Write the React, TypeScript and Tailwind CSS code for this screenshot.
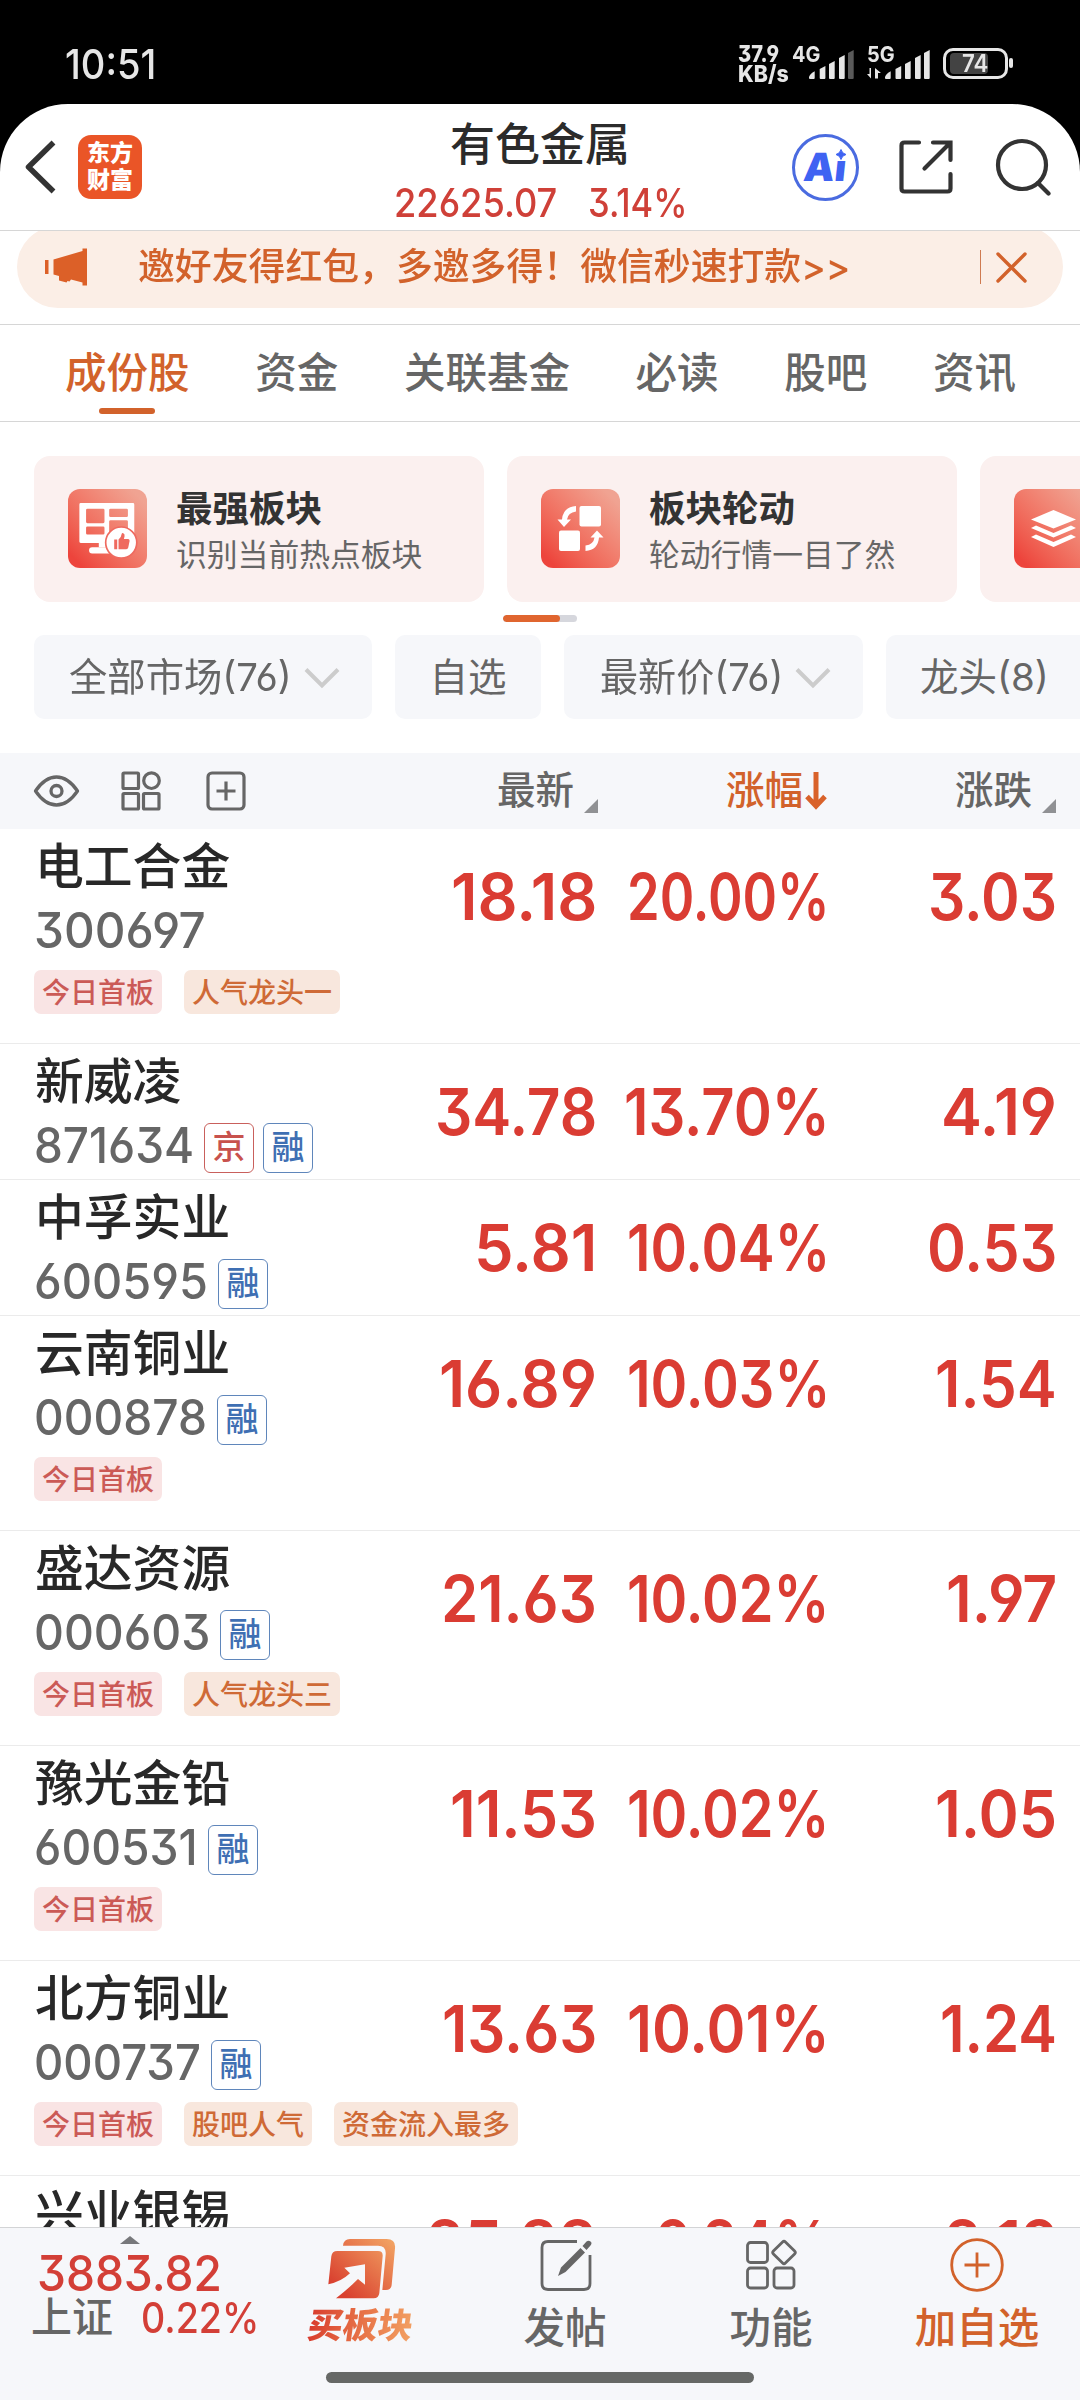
import { useLayoutEffect, useRef, useState } from "react";
import type { ReactNode } from "react";

type Tag = { text: string; hot?: boolean };

// each number carries the width it takes up in its column
type Num = [text: string, width: number];

type Stock = {
  name: string;
  code: Num;
  marks?: string[];
  tags?: Tag[];
  price: Num;
  pct: Num;
  change: Num;
};

const FIRST: Tag = { text: "今日首板", hot: true };

const stocks: Stock[] = [
  {
    name: "电工合金",
    code: ["300697", 168],
    tags: [FIRST, { text: "人气龙头一" }],
    price: ["18.18", 140],
    pct: ["20.00%", 197],
    change: ["3.03", 123],
  },
  {
    name: "新威凌",
    code: ["871634", 156],
    marks: ["京", "融"],
    price: ["34.78", 156],
    pct: ["13.70%", 200],
    change: ["4.19", 110],
  },
  {
    name: "中孚实业",
    code: ["600595", 170],
    marks: ["融"],
    price: ["5.81", 117],
    pct: ["10.04%", 197],
    change: ["0.53", 124],
  },
  {
    name: "云南铜业",
    code: ["000878", 169],
    marks: ["融"],
    tags: [FIRST],
    price: ["16.89", 152],
    pct: ["10.03%", 197],
    change: ["1.54", 116],
  },
  {
    name: "盛达资源",
    code: ["000603", 172],
    marks: ["融"],
    tags: [FIRST, { text: "人气龙头三" }],
    price: ["21.63", 150],
    pct: ["10.02%", 197],
    change: ["1.97", 105],
  },
  {
    name: "豫光金铅",
    code: ["600531", 160],
    marks: ["融"],
    tags: [FIRST],
    price: ["11.53", 141],
    pct: ["10.02%", 197],
    change: ["1.05", 116],
  },
  {
    name: "北方铜业",
    code: ["000737", 163],
    marks: ["融"],
    tags: [FIRST, { text: "股吧人气" }, { text: "资金流入最多" }],
    price: ["13.63", 149],
    pct: ["10.01%", 197],
    change: ["1.24", 111],
  },
  {
    name: "兴业银锡",
    code: ["000426", 169],
    marks: ["融"],
    price: ["25.88", 165],
    pct: ["9.24%", 168],
    change: ["2.19", 107],
  },
];

// Squeezes a line of text to the given width
const Fit = ({ w, children }: { w: number; children: ReactNode }) => {
  const ref = useRef<HTMLSpanElement>(null);
  const [scale, setScale] = useState(1);

  useLayoutEffect(() => {
    if (ref.current) setScale(w / ref.current.offsetWidth);
  }, [w]);

  return (
    <span className="inline-flex shrink-0 justify-start" style={{ width: w }}>
      <span
        ref={ref}
        className="inline-block shrink-0 origin-left whitespace-nowrap"
        style={{ transform: `scaleX(${scale})` }}
      >
        {children}
      </span>
    </span>
  );
};

const StatusBar = () => (
  <div className="flex h-[104px] shrink-0 justify-between pt-[44px] pr-[67px] pl-[65px] text-[#e6e6e6]">
    <div className="h-10 text-[41px] leading-10 font-medium">
      <Fit w={91}>10:51</Fit>
    </div>
    <div className="flex h-10">
      <div className="w-[55px] text-[23px] leading-[20px] font-extrabold">
        <div className="h-5">
          <Fit w={41}>37.9</Fit>
        </div>
        <div className="h-5">
          <Fit w={51}>KB/s</Fit>
        </div>
      </div>
      <div className="relative h-10 w-[137px] text-[22px] leading-5 font-bold">
        <svg className="h-10 w-[137px]" viewBox="0 0 137 40" fill="#e6e6e6">
          <path d="M16 33.500q0-3 5.700-6.200V34q0 1-1 1H17q-1 0-1-1zM26.700 25l5.700-3v12q0 1-1 1h-3.700q-1 0-1-1zM36 20l5.700-3v17q0 1-1 1H37q-1 0-1-1zM46 14l5.700-3v23q0 1-1 1H47q-1 0-1-1z" />
          <path d="M55 9l5.700-3v28q0 1-1 1H56q-1 0-1-1z" fill="#5a5a5a" />
          <path d="M78 24v10.500L74 30h2.500v-6zM82 34.500V24l6 5h-3v5.500z" />
          <path d="M92 33.500q0-3 5.700-6.200V34q0 1-1 1H93q-1 0-1-1zM102.500 25l5.700-3v12q0 1-1 1h-3.700q-1 0-1-1zM112 20l5.700-3v17q0 1-1 1H113q-1 0-1-1zM122 14l5.700-3v23q0 1-1 1H123q-1 0-1-1zM131 9l5.700-3v28q0 1-1 1H132q-1 0-1-1z" />
        </svg>
        <div className="absolute top-0 -left-px">
          <Fit w={28}>4G</Fit>
        </div>
        <div className="absolute top-0 left-[74px]">
          <Fit w={28}>5G</Fit>
        </div>
      </div>
      <div className="mt-1 ml-[13px] flex h-[31px] w-[65px] items-center rounded-[10px] border-[3px] border-[#e6e6e6] pl-1">
        <div className="flex h-[21px] w-[38px] items-center justify-end rounded-[4px] bg-[#434343] text-[24px] leading-[21px] font-semibold">
          <Fit w={26}>74</Fit>
        </div>
      </div>
      <div className="mt-[14px] ml-[1px] h-[10px] w-[4px] rounded-[2px] bg-[#e6e6e6]" />
    </div>
  </div>
);

const Header = () => (
  <div className="flex h-[127px] shrink-0 items-center rounded-t-[68px] border-b border-[#d6d6d6] bg-white">
    <svg className="ml-[23px] h-[56px] w-[36px]" viewBox="0 0 36 56" fill="none" stroke="#333" strokeWidth="5.500">
      <path d="M30.500 3.500 5.500 28l25 24.500" strokeLinejoin="round" />
    </svg>
    <div className="ml-[19px] flex h-[64px] w-[64px] flex-col items-center justify-center rounded-[13px] bg-[#ea5527] text-[23px] leading-[27px] font-black text-white">
      <span>东方</span>
      <span>财富</span>
    </div>
    <div className="ml-[250px] flex w-[296px] flex-col items-center pt-[13px]">
      <div className="h-[58px] text-[45px] leading-[58px] font-medium whitespace-nowrap text-[#2b2b2b]">有色金属</div>
      <div className="flex h-[58px] justify-center gap-[31px] text-[40px] leading-[58px] font-medium text-[#cf4038]">
        <Fit w={163}>22625.07</Fit>
        <Fit w={99}>3.14%</Fit>
      </div>
    </div>
    <div className="relative ml-[104px] flex h-[67px] w-[67px] items-center justify-center rounded-full border-[3.5px] border-[#4a6be0] text-[39px] leading-[40px] font-black text-[#3f63f2]">
      <div className="-skew-x-6">
        <Fit w={43}>Ai</Fit>
      </div>
      <svg className="absolute top-[12px] left-[36px] h-[14px] w-[18px]" viewBox="0 0 18 14">
        <rect width="18" height="12" fill="#fff" />
        <path d="M10 0.500q1 4 5 5-4 1-5 5-1-4-5-5 4-1 5-5z" fill="#3f63f2" stroke="#3f63f2" />
      </svg>
    </div>
    <svg className="ml-[40px] h-[54px] w-[54px]" viewBox="0 0 54 54" fill="none" stroke="#333" strokeWidth="4.200" strokeLinecap="round">
      <path d="M20 2.500H5.500Q2.500 2.500 2.500 5.500v43q0 3 3 3h43q3 0 3-3V34M34 2.500h17.500V20M50.500 3.500 25.500 28.500" />
    </svg>
    <svg className="ml-[42px] h-[58px] w-[58px]" viewBox="0 0 58 58" fill="none" stroke="#333" strokeWidth="4.200" strokeLinecap="round">
      <circle cx="27" cy="27" r="24" />
      <path d="m43 45 10.500 10.500" />
    </svg>
  </div>
);

const Banner = () => (
  <div className="h-[94px] shrink-0 overflow-hidden border-b border-[#d6d6d6] bg-white">
    <div className="mx-[17px] -mt-[5px] flex h-[82px] items-center rounded-full bg-[#fbeee6] text-[#d2622b]">
      <svg className="ml-[28px] h-[38px] w-[42px]" viewBox="0 0 42 38" fill="#dc6028">
        <path d="M0 12h3.500v14H0zM8.500 11.500 37.500 3V.5H42v37h-4.500v-3L26 31.500l-1.500 2-2-.5-1 1.500-7.500-2V28l-5.500-1.500z" />
      </svg>
      <div className="ml-[51px] h-[50px] w-[840px] text-[37px] leading-[50px] font-medium">
        <Fit w={712}>邀好友得红包，多邀多得！微信秒速打款&gt;&gt;</Fit>
      </div>
      <div className="ml-[2px] h-[34px] w-px bg-[#cf7a50]" />
      <svg className="ml-[15px] h-[31px] w-[31px]" viewBox="0 0 31 31" stroke="#d2622b" strokeWidth="3.400" strokeLinecap="round">
        <path d="m2 2 27 27M29 2 2 29" />
      </svg>
    </div>
  </div>
);

const tabs = ["成份股", "资金", "关联基金", "必读", "股吧", "资讯"];

const Tabs = () => (
  <div className="flex h-[97px] shrink-0 justify-between border-b border-[#d6d6d6] bg-white pr-[64px] pl-[65px] text-[41.5px] font-medium text-[#666]">
    {tabs.map((tab, i) => (
      <div key={tab} className={i === 0 ? "flex flex-col items-center text-[#d2622b]" : "flex flex-col items-center"}>
        <div className="h-[83px] leading-[97px] whitespace-nowrap">{tab}</div>
        {i === 0 && <div className="h-[6px] w-[56px] rounded-full bg-[#d2622b]" />}
      </div>
    ))}
  </div>
);

const StrongIcon = () => (
  <svg viewBox="0 0 236 236" fill="#fff">
    <path
      fillRule="evenodd"
      d="M38 42h156q4 0 4 4v111q0 4-4 4H38q-4 0-4-4V46q0-4 4-4zM58 59q-4 0-4 4v35q0 4 4 4h47q4 0 4-4V63q0-4-4-4zM58 112q-4 0-4 4v16q0 4 4 4h47q4 0 4-4v-16q0-4-4-4zM127 59q-4 0-4 4v17q0 4 4 4h48q4 0 4-4V63q0-4-4-4zM127 93q-4 0-4 4v35q0 4 4 4h48q4 0 4-4V97q0-4-4-4z"
    />
    <path d="M92 160h40v14H92z" />
    <rect x="63" y="174" width="80" height="19" rx="9" />
    <circle cx="159" cy="160" r="46.500" stroke="#ef6a5f" strokeWidth="5" />
    <path
      fill="#ef6a5f"
      d="M138 151h9v29h-9zM151 151q8-6 9-16 1-4 5-3 5 2 4 9l-2 8h13q5 1 4 6l-4 20q-1 5-6 5h-23z"
    />
  </svg>
);

const RotateIcon = () => (
  <svg viewBox="0 0 79 79" fill="#fff">
    <rect x="38.500" y="17" width="21.500" height="20.500" rx="2" />
    <rect x="18" y="41.500" width="21" height="20.500" rx="2" />
    <path d="M35 17v5.500q-8 1-9 8h4L23 38l-6.500-7.500H21Q22 18 35 17zM44.500 62v-5.500q8-1 9-8h-4L56 41.500l6.500 7H58Q57 61 44.500 62z" />
  </svg>
);

const LayersIcon = () => (
  <svg viewBox="0 0 79 79" fill="#fff">
    <path d="M39.500 21 62 30.500 39.500 39.500 17 30.500z" />
    <path d="m17 39 5-2.500 17.500 7.500L57 36.500l5 2.500-22.500 9.500zM17 48l5-2.500L39.500 53 57 45.500l5 2.500-22.500 10z" />
  </svg>
);

const Card = ({ title, sub, icon }: { title: string; sub: string; icon: ReactNode }) => (
  <div className="flex h-[146px] w-[450px] shrink-0 items-center rounded-[16px] bg-[#fbf0ef] pl-[34px]">
    <div className="-mt-px h-[79px] w-[79px] rounded-[12px] bg-linear-to-tr from-[#ed443c] from-10% to-[#f0a392] to-90%">{icon}</div>
    <div className="ml-[29px] pt-[5px] whitespace-nowrap">
      <div className="text-[36.5px] leading-[46px] font-bold text-[#333]">{title}</div>
      <div className="text-[30.8px] leading-[46px] text-[#666]">{sub}</div>
    </div>
  </div>
);

const Chevron = () => (
  <svg className="mt-px ml-[12px] h-[22px] w-[36px]" viewBox="0 0 36 22" fill="none" stroke="#ccc" strokeWidth="4">
    <path d="M2 2.500 18 18.500 34 2.500" />
  </svg>
);

const Filters = () => (
  <div className="flex h-[84px] shrink-0 gap-[23px] pl-[34px] text-[38.5px] text-[#666]">
    <div className="flex h-full w-[338px] shrink-0 items-center rounded-[10px] bg-[#f6f7fa] pl-[35px]">
      <span className="pt-[2px]">
        <Fit w={223}>全部市场(76)</Fit>
      </span>
      <Chevron />
    </div>
    <div className="flex h-full w-[146px] shrink-0 items-center justify-center rounded-[10px] bg-[#f6f7fa] pt-[2px]">自选</div>
    <div className="flex h-full w-[299px] shrink-0 items-center rounded-[10px] bg-[#f6f7fa] pl-[36px]">
      <span className="pt-[2px]">
        <Fit w={183}>最新价(76)</Fit>
      </span>
      <Chevron />
    </div>
    <div className="flex h-full w-[240px] shrink-0 items-center rounded-[10px] bg-[#f6f7fa] pt-[2px] pl-[34px]">
      <Fit w={129}>龙头(8)</Fit>
    </div>
  </div>
);

const Corner = () => (
  <svg className="mt-[30px] ml-[10px] h-[14px] w-[14px]" viewBox="0 0 14 14" fill="#909194">
    <path d="M14 0v14H0z" />
  </svg>
);

const TableHead = () => (
  <div className="flex h-[76px] shrink-0 items-center bg-[#f6f7fa] text-[38.5px] font-medium text-[#666]">
    <div className="flex w-[360px] shrink-0 items-center pl-[33px]">
      <svg className="h-[32px] w-[47px]" viewBox="0 0 47 32" fill="none" stroke="#666" strokeWidth="3.300">
        <path d="M2.500 16Q12 2 23.500 2t21 14Q35 30 23.500 30t-21-14z" strokeLinejoin="round" />
        <circle cx="23.500" cy="16" r="5.500" />
      </svg>
      <svg className="ml-[41px] h-[40px] w-[40px]" viewBox="0 0 40 40" fill="none" stroke="#666" strokeWidth="3.200">
        <rect x="2" y="2" width="15.500" height="15.500" rx="1" />
        <circle cx="30.500" cy="9.700" r="7.800" />
        <rect x="2" y="22.500" width="15.500" height="15.500" rx="1" />
        <rect x="22.500" y="22.500" width="15.500" height="15.500" rx="1" />
      </svg>
      <svg className="ml-[45px] h-[40px] w-[40px]" viewBox="0 0 40 40" fill="none" stroke="#666" strokeWidth="3.200">
        <rect x="2" y="2" width="36" height="36" rx="4" />
        <path d="M20 10.500v19M10.500 20h19" />
      </svg>
    </div>
    <div className="flex w-[238px] shrink-0 items-center justify-end">
      最新
      <Corner />
    </div>
    <div className="flex w-[229px] shrink-0 items-center justify-end text-[#d2622b]">
      涨幅
      <svg className="ml-[2px] h-[38px] w-[22px]" viewBox="0 0 22 38" fill="none" stroke="#d9622a" strokeWidth="5">
        <path d="M11 0v33M2 24.500l9 9.500 9-9.500" />
      </svg>
    </div>
    <div className="flex w-[229px] shrink-0 items-center justify-end">
      涨跌
      <Corner />
    </div>
  </div>
);

const Mark = ({ text }: { text: string }) => (
  <div
    className={
      text === "京"
        ? "mt-[6px] flex h-[50px] w-[50px] items-center justify-center rounded-[6px] border border-[#c9605c] text-[33px] leading-none text-[#c8524d]"
        : "mt-[6px] flex h-[50px] w-[50px] items-center justify-center rounded-[6px] border border-[#5f86bb] text-[33px] leading-none text-[#3f6fb3]"
    }
  >
    <span className="-mt-px font-medium">{text}</span>
  </div>
);

const Value = ({ num, className }: { num: Num; className: string }) => (
  <div className={`flex h-[135px] shrink-0 items-center justify-end ${className}`}>
    <Fit w={num[1] + 6}>{num[0]}</Fit>
  </div>
);

const StockRow = ({ stock }: { stock: Stock }) => (
  <div
    className={
      stock.tags
        ? "flex h-[215px] shrink-0 border-b border-[#ebebeb]"
        : "flex h-[136px] shrink-0 border-b border-[#ebebeb]"
    }
  >
    <div className="w-[360px] shrink-0 pt-[9px] pl-[34px]">
      <div className="h-[57px] pl-px text-[48.8px] leading-[57px] font-medium text-[#282828]">{stock.name}</div>
      <div className="flex h-[70px] items-center text-[49px] leading-[70px] font-[550] text-[#666]">
        <span className="pt-[2px]">
          <Fit w={stock.code[1] + 4}>{stock.code[0]}</Fit>
        </span>
        <div className="ml-[10px] flex gap-[9px]">
          {stock.marks?.map((m) => (
            <Mark key={m} text={m} />
          ))}
        </div>
      </div>
      {stock.tags && (
        <div className="mt-[5px] flex gap-[22px]">
          {stock.tags.map((tag) => (
            <div
              key={tag.text}
              className={
                tag.hot
                  ? "h-[44px] shrink-0 rounded-[7px] bg-[#f9e4e4] px-[8px] text-[28px] leading-[46px] font-medium whitespace-nowrap text-[#cb5a56]"
                  : "h-[44px] shrink-0 rounded-[7px] bg-[#f8e7dd] px-[8px] text-[28px] leading-[46px] font-medium whitespace-nowrap text-[#cf6a36]"
              }
            >
              {tag.text}
            </div>
          ))}
        </div>
      )}
    </div>
    <div className="flex text-[64px] leading-[80px] font-semibold text-[#da3c33]">
      <Value num={stock.price} className="w-[237px]" />
      <Value num={stock.pct} className="w-[233px]" />
      <Value num={stock.change} className="w-[227px]" />
    </div>
  </div>
);

const BuyIcon = () => (
  <svg className="ml-[3px] h-[62px] w-[68px]" viewBox="112 40 204 184">
    <defs>
      <linearGradient id="buy" x1="0" y1="1" x2="1" y2="0">
        <stop offset="0.150" stopColor="#d9402f" />
        <stop offset="1" stopColor="#f3a765" />
      </linearGradient>
    </defs>
    <path
      fill="url(#buy)"
      d="M157 62Q159 42 178 42H288Q316 42 313 70L303 180Q301 195 286 195H275L285 88Q287 62 262 62zM140 78H262Q277 78 276 93L266 204Q264 220 249 220H136Q172 192 202 162L223 179V118L161 128 178 145Q152 170 113 178L122 94Q124 78 140 78z"
    />
  </svg>
);

const NavItem = ({ label, icon, active }: { label: string; icon: ReactNode; active?: boolean }) => (
  <div
    className={
      active
        ? "flex w-[206px] flex-col items-center pt-[10px] text-[#d2622b]"
        : "flex w-[206px] flex-col items-center pt-[10px] text-[#666]"
    }
  >
    {icon}
    <div className="mt-[10px] text-[41.5px] leading-[52px] font-medium">{label}</div>
  </div>
);

const BottomBar = () => (
  <div className="h-[173px] shrink-0 border-t border-[#d3d4d6] bg-[#f6f7fa]">
    <div className="flex h-[144px]">
      <div className="w-[259px]">
        <svg className="mt-[8px] ml-[120px] h-[8px] w-[20px]" viewBox="0 0 20 8" fill="#77787b">
          <path d="m10 0 10 8H0z" />
        </svg>
        <div className="mt-[5px] ml-[37px] h-[50px] text-[49px] leading-[50px] font-medium text-[#d33f37]">
          <Fit w={185}>3883.82</Fit>
        </div>
        <div className="ml-[31px] flex h-[36px] items-center text-[#666]">
          <span className="w-[112px] text-[41px] leading-[36px] font-medium">上证</span>
          <span className="flex text-[43px] leading-[36px] font-medium text-[#d33f37]">
            <Fit w={118}>0.22%</Fit>
          </span>
        </div>
      </div>
      <div className="flex w-[203px] flex-col items-center pt-[10px]">
        <BuyIcon />
        <div className="mt-[3px] -skew-x-8 bg-linear-to-r from-[#d83a2d] to-[#f2a062] bg-clip-text text-[35px] leading-[44px] font-black text-transparent">
          买板块
        </div>
      </div>
      <NavItem
        label="发帖"
        icon={
          <svg className="ml-[2px] h-[54px] w-[54px]" viewBox="0 0 54 54" fill="none" stroke="#666" strokeWidth="2.800">
            <path d="M38 3.500H9Q3 3.500 3 9.500v36q0 6 6 6h36q6 0 6-6V17" />
            <path d="M19 38 22 29.500 41.500 10l4.500 4.500L26.500 34zM43.500 8l4-4.500q2-1.500 4 0t0 4L47.500 12z" fill="#666" stroke="none" />
          </svg>
        }
      />
      <NavItem
        label="功能"
        icon={
          <svg className="h-[54px] w-[54px]" viewBox="0 0 54 54" fill="none" stroke="#666" strokeWidth="2.800">
            <rect x="3.500" y="4.500" width="20" height="20" rx="3" />
            <rect x="-8.500" y="-8.500" width="17" height="17" rx="2" transform="translate(40 14.500) rotate(45)" />
            <rect x="3.500" y="30" width="20" height="20" rx="3" />
            <rect x="30" y="30" width="20" height="20" rx="3" />
          </svg>
        }
      />
      <NavItem
        active
        label="加自选"
        icon={
          <svg className="h-[54px] w-[54px]" viewBox="0 0 54 54" fill="none" stroke="#d2622b" strokeWidth="2.800">
            <circle cx="27" cy="27" r="25.300" />
            <path d="M27 14.500v25M14.500 27h25" />
          </svg>
        }
      />
    </div>
    <div className="mx-auto h-[11px] w-[428px] rounded-full bg-[#666866]" />
  </div>
);

export default function App() {
  return (
    <div className="flex h-[2400px] w-[1080px] flex-col overflow-hidden bg-black font-['Inter','Noto_Sans_CJK_SC',sans-serif] [font-feature-settings:'cv03','cv04','cv09']">
      <StatusBar />
      <Header />
      <Banner />
      <Tabs />
      <div className="flex min-h-0 flex-1 flex-col overflow-hidden bg-white pt-[34px]">
        <div className="flex shrink-0 gap-[23px] pl-[34px]">
          <Card title="最强板块" sub="识别当前热点板块" icon={<StrongIcon />} />
          <Card title="板块轮动" sub="轮动行情一目了然" icon={<RotateIcon />} />
          <Card title="" sub="" icon={<LayersIcon />} />
        </div>
        <div className="mt-[13px] mb-[13px] ml-[503px] h-[7px] w-[74px] shrink-0 overflow-hidden rounded-full bg-[#d6d7dd]">
          <div className="h-full w-[57px] rounded-full bg-[#e0652f]" />
        </div>
        <Filters />
        <div className="h-[34px] shrink-0" />
        <TableHead />
        {stocks.map((stock) => (
          <StockRow key={stock.name} stock={stock} />
        ))}
      </div>
      <BottomBar />
    </div>
  );
}
